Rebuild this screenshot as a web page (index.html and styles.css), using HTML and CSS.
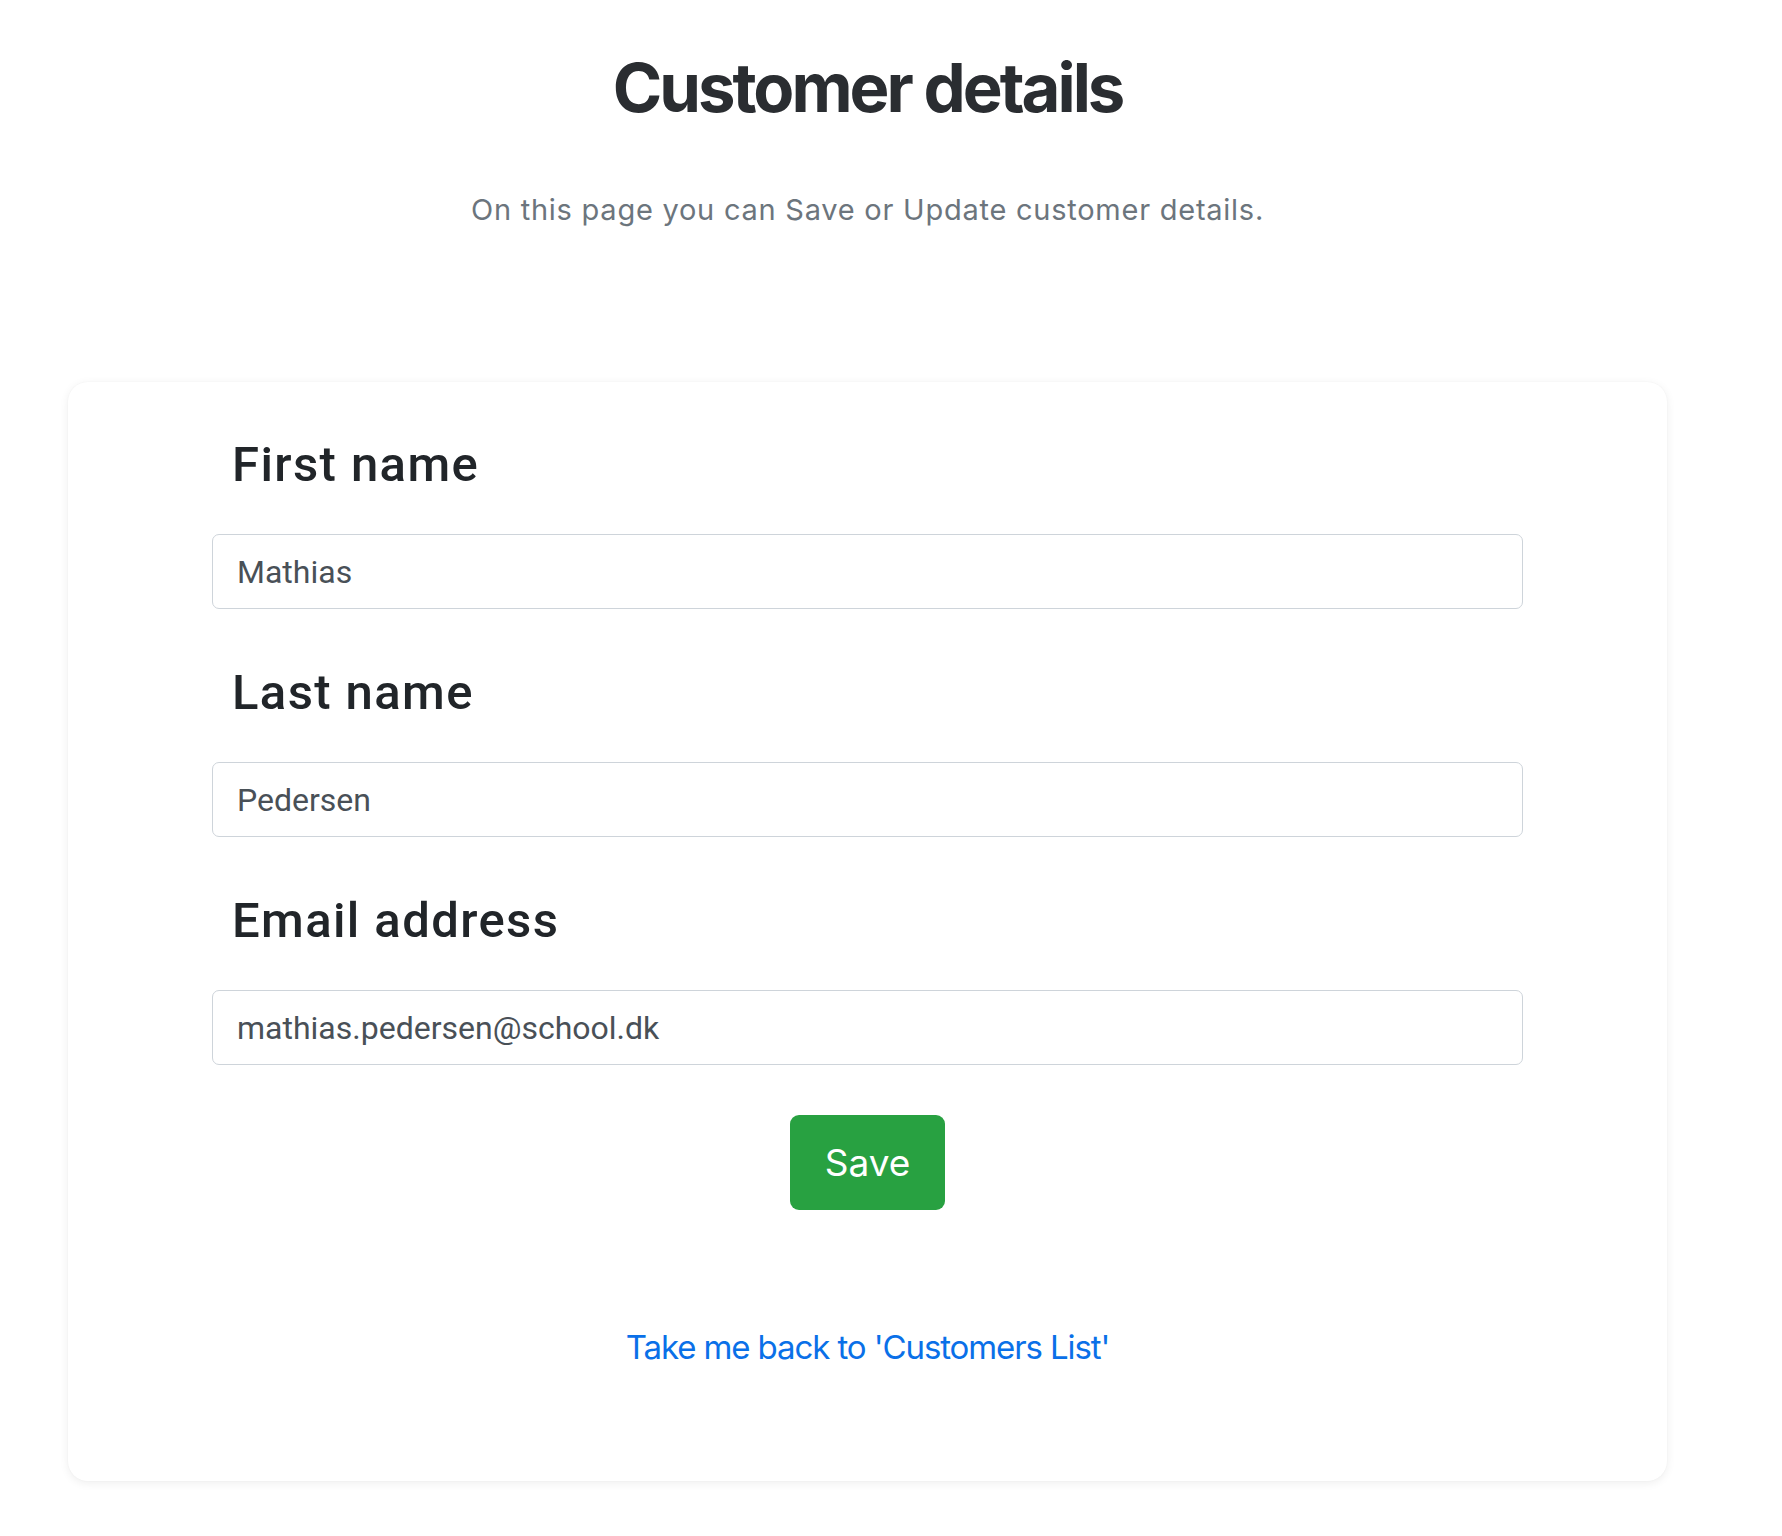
FILE: index.html
```html
<!DOCTYPE html>
<html lang="en">
<head>
<meta charset="utf-8">
<title>Customer details</title>
<link rel="stylesheet" href="styles.css">
</head>
<body>
<main class="page">
  <h1 class="title">Customer details</h1>
  <p class="subtitle">On this page you can Save or Update customer details.</p>
  <section class="card">
    <form class="form">
      <div class="fields">
        <div class="field">
          <label class="label" for="first">First name</label>
          <input class="input" id="first" type="text" value="Mathias">
        </div>
        <div class="field">
          <label class="label" for="last">Last name</label>
          <input class="input" id="last" type="text" value="Pedersen">
        </div>
        <div class="field">
          <label class="label" for="email">Email address</label>
          <input class="input" id="email" type="email" value="mathias.pedersen@school.dk">
        </div>
      </div>
      <div class="actions">
        <button class="btn-save" type="button">Save</button>
      </div>
      <div class="back">
        <a class="back-link" href="#">Take me back to 'Customers List'</a>
      </div>
    </form>
  </section>
</main>
</body>
</html>
```

FILE: styles.css
```css
* { box-sizing: border-box; }

html, body {
  margin: 0;
  padding: 0;
  background: #ffffff;
}

body {
  font-family: "Inter", "Liberation Sans", sans-serif;
  color: #212529;
}

.page {
  width: 1599px;
  margin-left: 68px;
  padding-top: 47px;
  padding-bottom: 50px;
}

.title {
  margin: 0;
  text-align: center;
  font-family: "Inter", sans-serif;
  font-weight: 700;
  font-size: 67px;
  line-height: 82px;
  color: #2a2d31;
  letter-spacing: -3px;
}

.subtitle {
  margin: 63px 0 0;
  text-align: center;
  font-family: "Inter", sans-serif;
  font-size: 29px;
  line-height: 36px;
  color: #6c757d;
  letter-spacing: 0.75px;
}

.card {
  margin-top: 154px;
  background: #ffffff;
  border-radius: 20px;
  box-shadow: 0 2px 10px rgba(0, 0, 0, 0.07), 0 0 2px rgba(0, 0, 0, 0.04);
  padding: 53px 144px 108px;
}

.form {
  display: flex;
  flex-direction: column;
}

.fields {
  display: flex;
  flex-direction: column;
  gap: 54px;
}

.field {
  display: flex;
  flex-direction: column;
  gap: 39px;
}

.label {
  padding-left: 20px;
  font-family: "Roboto", sans-serif;
  font-weight: 500;
  font-size: 49px;
  line-height: 60px;
  color: #212529;
  letter-spacing: 1.4px;
}

.input {
  display: block;
  width: 100%;
  height: 75px;
  margin: 0;
  padding: 0 24px;
  border: 1.5px solid #ced4da;
  border-radius: 7px;
  background: #ffffff;
  font-family: "Roboto", sans-serif;
  font-size: 32px;
  color: #495057;
  outline: none;
}

.actions {
  display: flex;
  justify-content: center;
  margin-top: 50px;
}

.btn-save {
  height: 95px;
  padding: 0 35px;
  border: none;
  border-radius: 9px;
  background: #28a141;
  color: #ffffff;
  font-family: "Inter", sans-serif;
  font-size: 37px;
  font-weight: 400;
  cursor: pointer;
}

.back {
  margin-top: 117px;
  text-align: center;
  line-height: 40px;
}

.back-link {
  font-family: "Inter", sans-serif;
  font-size: 33px;
  color: #0a70e8;
  text-decoration: none;
  letter-spacing: -1.1px;
}
```
